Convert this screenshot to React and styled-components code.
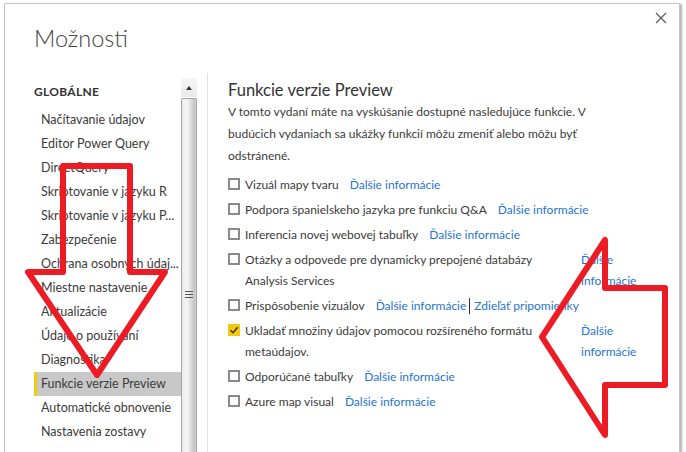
import React from "react";
import styled, { createGlobalStyle } from "styled-components";

const GlobalStyle = createGlobalStyle`
  html, body {
    margin: 0;
    padding: 0;
    background: #ffffff;
    overflow: hidden;
  }
  body {
    font-family: "Lato", "Noto Sans", sans-serif;
    color: #3b3b3b;
  }
`;

const Page = styled.div`
  position: relative;
  width: 686px;
  height: 452px;
  padding: 3px 0 0 4px;
  box-sizing: border-box;
`;

const Dialog = styled.div`
  width: 676px;
  height: 470px;
  box-sizing: border-box;
  border: 1px solid #c4c4c4;
  box-shadow: 3px 0 2px -1px rgba(0, 0, 0, 0.3);
  background: #fff;
  display: flex;
  flex-direction: column;
`;

const Header = styled.div`
  height: 69px;
  flex-shrink: 0;
  display: flex;
  justify-content: space-between;
  align-items: flex-start;
  padding-left: 29px;
  padding-right: 11px;
  box-sizing: border-box;
`;

const Title = styled.h1`
  margin: 17px 0 0 0;
  font-size: 23.5px;
  font-weight: 300;
  color: #444;
  line-height: 34px;
`;

const CloseButton = styled.button`
  margin-top: 7px;
  width: 14px;
  height: 14px;
  padding: 0;
  border: none;
  background: none;
  display: flex;
  align-items: center;
  justify-content: center;
`;

const Body = styled.div`
  flex: 1;
  display: flex;
`;

const Sidebar = styled.div`
  width: 202px;
  flex-shrink: 0;
  display: flex;
  border-right: 1px solid #e2e2e2;
`;

const Nav = styled.div`
  width: 147px;
  flex-shrink: 0;
  margin-left: 29px;
  display: flex;
  flex-direction: column;
`;

const SectionTitle = styled.div`
  font-size: 12px;
  font-weight: 700;
  color: #333;
  margin-top: 11px;
  height: 24px;
  line-height: 16px;
  letter-spacing: 0.3px;
`;

const NavItem = styled.div`
  height: 24px;
  line-height: 24px;
  font-size: 12.5px;
  padding-left: 4px;
  border-left: 3px solid ${(p) => (p.$active ? "#f2c811" : "transparent")};
  background: ${(p) => (p.$active ? "#c8c8c8" : "transparent")};
  color: #3b3b3b;
  white-space: nowrap;
`;

const Scrollbar = styled.div`
  width: 16px;
  flex-shrink: 0;
  margin-top: 5px;
  display: flex;
  flex-direction: column;
`;

const ScrollUp = styled.div`
  height: 19px;
  background: linear-gradient(#f6f6f6, #e9e9e9);
  display: flex;
  align-items: center;
  justify-content: center;
  &::after {
    content: "";
    border-left: 3.5px solid transparent;
    border-right: 3.5px solid transparent;
    border-bottom: 4px solid #333;
  }
`;

const Thumb = styled.div`
  flex: 1;
  margin-top: 1px;
  border: 1px solid #a3a3a3;
  border-bottom: none;
  border-radius: 2px 2px 0 0;
  background: linear-gradient(to right, #ececec, #f6f6f6 35%, #d2d2d2 75%, #c2c2c2 90%, #dcdcdc);
  display: flex;
  justify-content: center;
  padding-top: 192px;
`;

const Grip = styled.div`
  width: 8px;
  height: 7px;
  background: repeating-linear-gradient(#555 0 1px, transparent 1px 3px);
`;

const Content = styled.div`
  flex: 1;
  min-width: 0;
  padding-left: 20px;
`;

const Heading = styled.h2`
  margin: 5px 0 0 0;
  font-size: 16.5px;
  font-weight: 400;
  color: #333;
  line-height: 24px;
`;

const Paragraph = styled.p`
  margin: -1px 0 0 0;
  font-size: 12px;
  line-height: 22px;
  color: #3b3b3b;
  width: 372px;
`;

const Options = styled.div`
  margin-top: 7px;
  display: flex;
  flex-direction: column;
  gap: 4px;
`;

const Row = styled.div`
  display: flex;
  align-items: flex-start;
  font-size: 12px;
  line-height: 21px;
`;

const Box = styled.span`
  width: 12px;
  height: 12px;
  box-sizing: border-box;
  margin-top: 4px;
  margin-right: 5px;
  border: ${(p) => (p.$checked ? "none" : "2px solid #8a8a8a")};
  background: ${(p) => (p.$checked ? "#f2c811" : "#fff")};
  flex-shrink: 0;
  display: flex;
  align-items: center;
  justify-content: center;
`;

const Label = styled.span`
  color: #3b3b3b;
  width: ${(p) => (p.$wide ? "318px" : "auto")};
  flex-shrink: 0;
  margin-right: ${(p) => (p.$wide ? "18px" : "11px")};
`;

const Link = styled.span`
  color: #1f74cf;
  width: ${(p) => (p.$narrow ? "70px" : "auto")};
  white-space: ${(p) => (p.$narrow ? "normal" : "nowrap")};
`;

const Sep = styled.span`
  display: inline-block;
  width: 1px;
  height: 16px;
  margin: 3px 4px 0 3px;
  background: #333;
`;

const Overlay = styled.svg`
  position: absolute;
  left: 0;
  top: 0;
  pointer-events: none;
`;

const navItems = [
  "Načítavanie údajov",
  "Editor Power Query",
  "DirectQuery",
  "Skriptovanie v jazyku R",
  "Skriptovanie v jazyku P...",
  "Zabezpečenie",
  "Ochrana osobných údaj...",
  "Miestne nastavenie",
  "Aktualizácie",
  "Údaje o používaní",
  "Diagnostika",
  "Funkcie verzie Preview",
  "Automatické obnovenie",
  "Nastavenia zostavy",
];

const more = "Ďalšie informácie";

const Check = ({ checked }) => (
  <Box $checked={checked}>
    {checked && (
      <svg width="10" height="10" viewBox="0 0 10 10">
        <path d="M1.5 5.2 L4 7.7 L8.7 2.3" fill="none" stroke="#333" strokeWidth="1.4" />
      </svg>
    )}
  </Box>
);

export default function App() {
  return (
    <>
      <GlobalStyle />
      <Page>
        <Dialog>
          <Header>
            <Title>Možnosti</Title>
            <CloseButton aria-label="Zavrieť">
              <svg width="12" height="12" viewBox="0 0 12 12">
                <path d="M1 1 L11 11 M11 1 L1 11" stroke="#555" strokeWidth="1.1" />
              </svg>
            </CloseButton>
          </Header>
          <Body>
            <Sidebar>
              <Nav>
                <SectionTitle>GLOBÁLNE</SectionTitle>
                {navItems.map((n) => (
                  <NavItem key={n} $active={n === "Funkcie verzie Preview"}>
                    {n}
                  </NavItem>
                ))}
              </Nav>
              <Scrollbar>
                <ScrollUp />
                <Thumb>
                  <Grip />
                </Thumb>
              </Scrollbar>
            </Sidebar>
            <Content>
              <Heading>Funkcie verzie Preview</Heading>
              <Paragraph>
                V tomto vydaní máte na vyskúšanie dostupné nasledujúce funkcie. V budúcich
                vydaniach sa ukážky funkcií môžu zmeniť alebo môžu byť odstránené.
              </Paragraph>
              <Options>
                <Row>
                  <Check />
                  <Label>Vizuál mapy tvaru</Label>
                  <Link>{more}</Link>
                </Row>
                <Row>
                  <Check />
                  <Label>Podpora španielskeho jazyka pre funkciu Q&amp;A</Label>
                  <Link>{more}</Link>
                </Row>
                <Row>
                  <Check />
                  <Label>Inferencia novej webovej tabuľky</Label>
                  <Link>{more}</Link>
                </Row>
                <Row>
                  <Check />
                  <Label $wide>
                    Otázky a odpovede pre dynamicky prepojené databázy Analysis Services
                  </Label>
                  <Link $narrow>{more}</Link>
                </Row>
                <Row>
                  <Check />
                  <Label>Prispôsobenie vizuálov</Label>
                  <Link>{more}</Link>
                  <Sep />
                  <Link>Zdieľať pripomienky</Link>
                </Row>
                <Row>
                  <Check checked />
                  <Label $wide>
                    Ukladať množiny údajov pomocou rozšíreného formátu metaúdajov.
                  </Label>
                  <Link $narrow>{more}</Link>
                </Row>
                <Row>
                  <Check />
                  <Label>Odporúčané tabuľky</Label>
                  <Link>{more}</Link>
                </Row>
                <Row>
                  <Check />
                  <Label>Azure map visual</Label>
                  <Link>{more}</Link>
                </Row>
              </Options>
            </Content>
          </Body>
        </Dialog>
        <Overlay width="686" height="452" viewBox="0 0 686 452">
          <g fill="none" stroke="#ed1c24" strokeWidth="6" strokeLinejoin="round">
            <polygon points="63,166 130,166 130,272 165,272 97,375 28,272 63,272" />
            <polygon points="542,337 605,240 605,288 665,288 665,385 605,385 605,435" />
          </g>
        </Overlay>
      </Page>
    </>
  );
}
